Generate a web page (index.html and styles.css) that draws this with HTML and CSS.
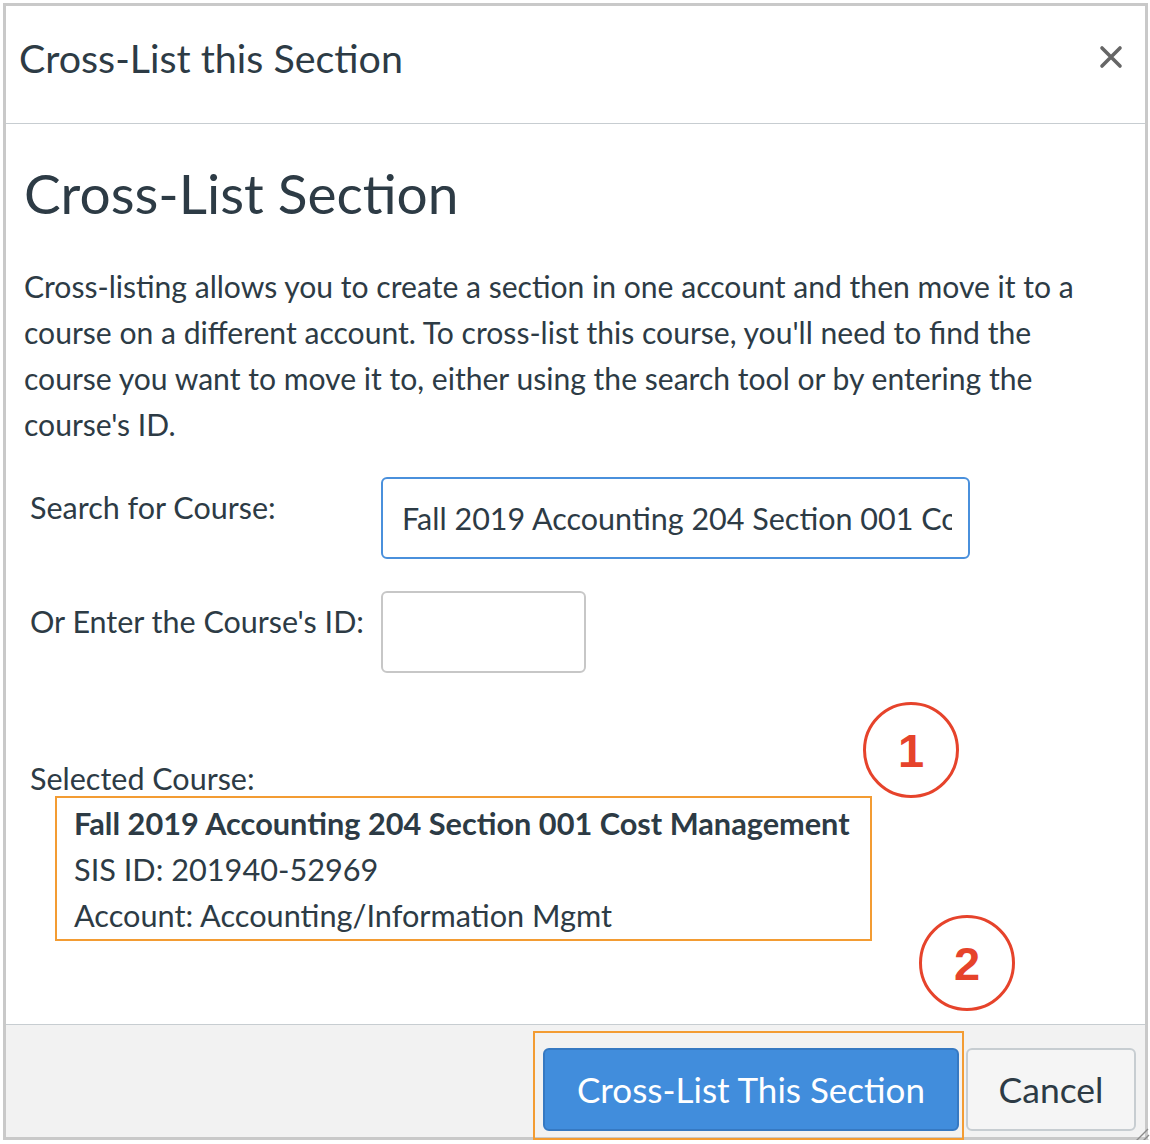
FILE: index.html
```html
<!DOCTYPE html>
<html lang="en">
<head>
<meta charset="utf-8">
<title>Cross-List this Section</title>
<link rel="stylesheet" href="styles.css">
</head>
<body>
<div class="dialog">
  <div class="header">
    <h2 class="title">Cross-List this Section</h2>
    <button class="close" aria-label="Close">
      <svg width="24" height="24" viewBox="0 0 24 24"><path d="M3 3 L21 21 M21 3 L3 21" stroke="#666" stroke-width="3.6" stroke-linecap="round"/></svg>
    </button>
  </div>
  <div class="body">
    <h1 class="heading">Cross-List Section</h1>
    <p class="intro">Cross-listing allows you to create a section in one account and then move it to a course on a different account. To cross-list this course, you'll need to find the course you want to move it to, either using the search tool or by entering the course's ID.</p>
    <div class="form">
      <label class="label">Search for Course:</label>
      <input class="field field-search" type="text" value="Fall 2019 Accounting 204 Section 001 Cost Management">
      <label class="label">Or Enter the Course's ID:</label>
      <input class="field field-id" type="text" value="">
    </div>
    <div class="selected">
      <div class="selected-label">Selected Course:</div>
      <div class="selected-box">
        <div class="course-name">Fall 2019 Accounting 204 Section 001 Cost Management</div>
        <div>SIS ID: 201940-52969</div>
        <div>Account: Accounting/Information Mgmt</div>
      </div>
    </div>
    <div class="marker marker-1">1</div>
    <div class="marker marker-2">2</div>
  </div>
  <div class="footer">
    <div class="highlight">
      <button class="btn btn-primary">Cross-List This Section</button>
    </div>
    <button class="btn btn-cancel">Cancel</button>
    <svg class="grip" width="22" height="20" viewBox="0 0 22 20"><path d="M20 4 L5 19 M21 10 L12 19 M21 15 L17 19" stroke="#8a8a8a" stroke-width="1.4"/></svg>
  </div>
</div>
</body>
</html>
```
FILE: styles.css
```css
* { box-sizing: border-box; }
html, body { margin: 0; padding: 0; background: #ffffff; }
body {
  font-family: Lato, "Open Sans", "Liberation Sans", sans-serif;
  color: #2d3b45;
}
.dialog {
  position: relative;
  margin: 3px 0 0 3px;
  width: 1145px;
  height: 1137px;
  border: 3px solid #c9c9c9;
  display: flex;
  flex-direction: column;
  background: #fff;
}
.header {
  height: 118px;
  flex: none;
  border-bottom: 1px solid #c7cdd1;
  display: flex;
  align-items: center;
  justify-content: space-between;
  padding: 0 22px 0 13px;
}
.title {
  margin: -14px 0 0;
  font-size: 39.4px;
  font-weight: 400;
  line-height: 1.2;
}
.close {
  border: 0;
  background: none;
  padding: 0;
  width: 24px;
  height: 24px;
  margin-top: -16px;
  display: flex;
}
.body {
  position: relative;
  flex: 1;
  padding: 36px 45px 0 18px;
}
.heading {
  margin: 0;
  font-size: 55px;
  font-weight: 400;
  line-height: 67px;
}
.intro {
  margin: 36px 0 0;
  max-width: 1065px;
  font-size: 30.1px;
  line-height: 46px;
}
.form {
  margin-top: 30px;
  display: grid;
  grid-template-columns: 351px auto;
  row-gap: 32px;
  padding-left: 6px;
  align-items: start;
}
.label {
  font-size: 30.5px;
  line-height: 46px;
  margin-top: 7px;
}
.field {
  height: 82px;
  border-radius: 6px;
  font-family: Lato, "Open Sans", "Liberation Sans", sans-serif;
  font-size: 30.5px;
  color: #2d3b45;
  background: #fff;
  outline: none;
}
.field-search {
  width: 589px;
  border: 2px solid #4a90dc;
  padding: 0 16px 0 19px;
}
.field-id {
  width: 205px;
  border: 2px solid #c7c7c7;
}
.selected {
  margin-top: 87px;
  padding-left: 6px;
}
.selected-label {
  font-size: 30.5px;
  line-height: 36px;
  height: 36px;
}
.selected-box {
  display: inline-block;
  margin-left: 25px;
  border: 2px solid #f39c33;
  padding: 3px 20px 0 17px;
  font-size: 30.7px;
  line-height: 46px;
}
.course-name { font-weight: 700; }
.marker {
  position: absolute;
  width: 96px;
  height: 96px;
  border: 3.5px solid #e6432b;
  border-radius: 50%;
  display: flex;
  align-items: center;
  justify-content: center;
  color: #e6432b;
  font-family: "Liberation Sans", Arial, sans-serif;
  font-weight: 700;
  font-size: 47px;
  line-height: 1;
}
.marker-1 { left: 857px; top: 578px; }
.marker-2 { left: 913px; top: 791px; }
.footer {
  position: relative;
  flex: none;
  height: 113px;
  border-top: 1px solid #c7cdd1;
  background: #f2f2f2;
  display: flex;
  justify-content: flex-end;
  align-items: flex-start;
  padding: 6px 9px 0 0;
}
.highlight {
  border: 2px solid #f39c33;
  padding: 15px 3px 7px 8px;
  height: 109px;
}
.btn {
  height: 83px;
  border-radius: 6px;
  font-family: Lato, "Open Sans", "Liberation Sans", sans-serif;
  font-size: 35px;
  line-height: 1;
  cursor: pointer;
}
.btn-primary {
  width: 416px;
  background: #418ddc;
  border: 2px solid #3679c2;
  color: #fff;
}
.btn-cancel {
  margin-top: 17px;
  margin-left: 2px;
  width: 170px;
  background: #f5f5f5;
  border: 2px solid #c7cdd1;
  color: #2d3b45;
  font-size: 35.5px;
}
.grip {
  position: absolute;
  right: -5px;
  bottom: -8px;
}
```
